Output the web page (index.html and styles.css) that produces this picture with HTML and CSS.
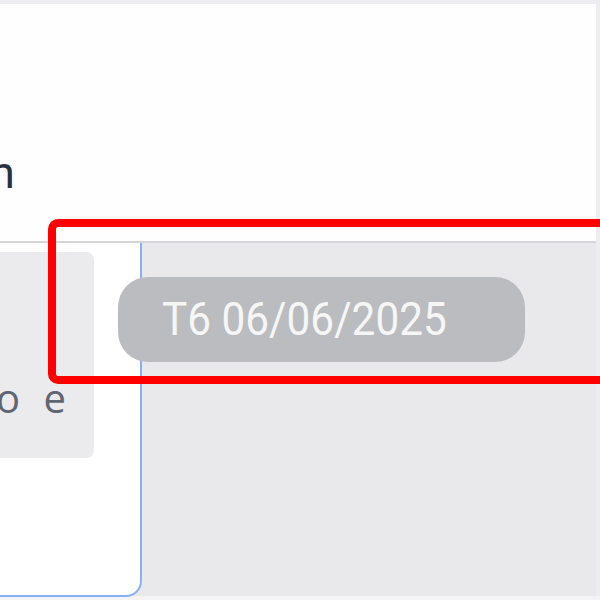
FILE: index.html
```html
<!DOCTYPE html>
<html lang="vi">
<head>
  <meta charset="UTF-8">
  <meta name="viewport" content="width=device-width, initial-scale=1.0">
  <title>Chat</title>
  <link rel="stylesheet" href="styles.css">
</head>
<body>
  <div class="screen">
    <header class="top">
      <div class="title"><span class="title-text">n</span></div>
    </header>

    <main class="chat">
      <section class="side-card">
        <div class="bubble">
          <p class="bubble-text">ko e</p>
        </div>
      </section>
      <section class="thread"></section>

      <div class="date-chip"><span class="date-text">T6 06/06/2025</span></div>
      <div class="highlight"></div>
    </main>
  </div>
  <div class="bottom-strip"></div>
</body>
</html>
```

FILE: styles.css
```css
:root {
  --frame: #ececf1;
  --line: #d6d6da;
  --blue: #86b1f6;
  --thread: #e9e9ec;
  --bubble: #ebebee;
  --chip: #bbbcbf;
  --dark: #293040;
  --muted: #5f6572;
  --red: #ff0000;
}

* {
  margin: 0;
  padding: 0;
  box-sizing: border-box;
}

html, body {
  width: 600px;
  height: 600px;
  overflow: hidden;
}

body {
  font-family: 'Roboto', 'Noto Sans', sans-serif;
  background-color: var(--frame);
  padding-top: 4px;
}

.screen {
  width: 596px;
  height: 592px;
  background: #fefefe;
  display: flex;
  flex-direction: column;
}

.top {
  height: 239px;
  padding-top: 147px;
  border-bottom: 2px solid var(--line);
  overflow: hidden;
}

.title {
  font-size: 45px;
  line-height: 44px;
  color: var(--dark);
}

.title-text {
  display: inline-block;
  margin-left: -10px;
}

.chat {
  flex: 1;
  display: flex;
  position: relative;
  background: var(--thread);
}

.side-card {
  width: 142px;
  background: #fff;
  border-right: 2px solid var(--blue);
  border-bottom: 2px solid var(--blue);
  border-bottom-right-radius: 16px;
  padding-top: 9px;
  margin-bottom: -1px;
}

.bubble {
  width: 94px;
  height: 206px;
  background: var(--bubble);
  border-radius: 0 8px 8px 0;
  padding-top: 127px;
  overflow: hidden;
}

.bubble-text {
  font-family: 'Open Sans', 'Noto Sans', sans-serif;
  font-size: 40px;
  font-weight: 500;
  line-height: 38px;
  letter-spacing: 2px;
  word-spacing: 9px;
  color: var(--muted);
  white-space: nowrap;
  margin-left: -27px;
}

.thread {
  flex: 1;
}

.date-chip {
  position: absolute;
  left: 118px;
  top: 34px;
  width: 407px;
  height: 85px;
  border-radius: 30px;
  background: var(--chip);
  padding-left: 44px;
  font-size: 46px;
  line-height: 85px;
  color: #f6f6f6;
  white-space: nowrap;
}

.date-text {
  display: inline-block;
  transform: scaleX(0.92);
  transform-origin: left center;
}

.highlight {
  position: absolute;
  left: 48px;
  top: -24px;
  width: 600px;
  height: 165px;
  border: 8px solid var(--red);
  border-radius: 10px;
}

.bottom-strip {
  height: 4px;
  background: #f4f4f6;
}
```
